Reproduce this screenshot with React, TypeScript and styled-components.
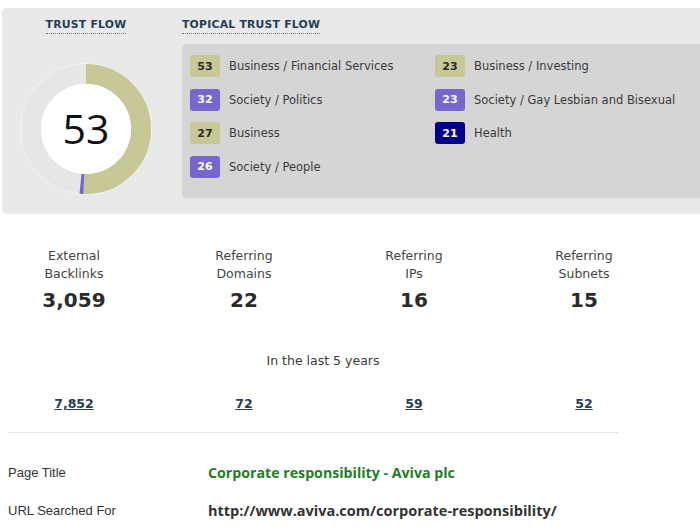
import React from "react";
import styled, { createGlobalStyle } from "styled-components";

const Global = createGlobalStyle`
  html, body { margin: 0; padding: 0; background: #fff; overflow: hidden; }
  body { font-family: "DejaVu Sans", Verdana, sans-serif; color: #333; }
`;

const Page = styled.div`
  width: 700px;
  overflow: hidden;
  padding-top: 8px;
`;

const TopPanel = styled.div`
  margin-left: 2px;
  width: 730px;
  height: 205px;
  background: #e9e9e9;
  border-radius: 4px;
  box-shadow: 0 1px 1px rgba(0, 0, 0, 0.06);
  display: flex;
`;

const TrustCol = styled.div`
  width: 168px;
  display: flex;
  flex-direction: column;
  align-items: center;
  padding-top: 10px;
`;

const Heading = styled.div`
  font-family: "DejaVu Sans", Verdana, sans-serif;
  font-weight: bold;
  font-size: 10.8px;
  letter-spacing: 0.25px;
  color: #233d58;
  border-bottom: 1px dotted #6a7c90;
  line-height: 14px;
  padding-bottom: 1px;
`;

const TopicalCol = styled.div`
  margin-left: 12px;
  flex: 1;
  display: flex;
  flex-direction: column;
  align-items: flex-start;
  padding-top: 10px;
`;

const TopicBox = styled.div`
  margin-top: 10px;
  align-self: stretch;
  height: 154px;
  box-sizing: border-box;
  background: #d5d5d5;
  border-radius: 4px 0 0 4px;
  padding: 11px 8px;
  display: grid;
  grid-template-columns: 245px 1fr;
  grid-template-rows: repeat(4, 22px);
  grid-auto-flow: column;
  row-gap: 11.5px;
`;

const TopicRow = styled.div`
  display: flex;
  align-items: center;
`;

const Badge = styled.span<{ $bg: string; $fg: string }>`
  width: 30px;
  height: 22px;
  border-radius: 3px;
  background: ${(p) => p.$bg};
  color: ${(p) => p.$fg};
  font-weight: bold;
  font-size: 11px;
  display: flex;
  align-items: center;
  justify-content: center;
  flex: none;
`;

const TopicLabel = styled.span`
  margin-left: 9px;
  font-size: 11.5px;
  color: #3a3a3a;
  white-space: nowrap;
`;

const DonutWrap = styled.div`
  position: relative;
  margin-top: 28px;
  width: 134px;
  height: 134px;
`;

const DonutValue = styled.div`
  position: absolute;
  inset: 0;
  display: flex;
  align-items: center;
  justify-content: center;
  font-family: "Open Sans", "Noto Sans", sans-serif;
  font-size: 41px;
  color: #111;
  padding-bottom: 3px;
`;

const Stats = styled.div`
  margin-top: 34px;
  display: grid;
  grid-template-columns: repeat(4, 170px);
`;

const Stat = styled.div`
  padding-right: 22px;
  display: flex;
  flex-direction: column;
  align-items: center;
  text-align: center;
`;

const StatLabel = styled.div`
  font-size: 12.5px;
  line-height: 18px;
  color: #444;
`;

const StatValue = styled.div`
  font-weight: bold;
  font-size: 20px;
  line-height: 28px;
  color: #2b2b2b;
  margin-top: 3px;
`;

const Period = styled.div`
  width: 646px;
  text-align: center;
  margin-top: 38px;
  font-size: 12.5px;
  line-height: 18px;
  color: #3a3a3a;
`;

const Links = styled.div`
  margin-top: 23px;
  display: grid;
  grid-template-columns: repeat(4, 170px);
`;

const LinkCell = styled.div`
  padding-right: 22px;
  text-align: center;
`;

const StatLink = styled.a`
  font-weight: bold;
  font-size: 12.5px;
  line-height: 18px;
  color: #2a3d52;
  text-decoration: underline;
`;

const Divider = styled.hr`
  margin: 19px 0 0 8px;
  width: 610px;
  border: none;
  border-top: 1px solid #e3e3e3;
`;

const InfoTable = styled.div`
  margin-top: 30px;
  margin-left: 8px;
  display: grid;
  grid-template-columns: 200px 1fr;
  row-gap: 18px;
  font-family: "Liberation Sans", Arial, sans-serif;
`;

const InfoLabel = styled.div`
  font-size: 13px;
  line-height: 20px;
  color: #333;
`;

const InfoValue = styled.div<{ $green?: boolean }>`
  font-family: "Open Sans", "Liberation Sans", sans-serif;
  font-weight: bold;
  font-size: ${(p) => (p.$green ? "14.2px" : "14.5px")};
  line-height: 20px;
  color: ${(p) => (p.$green ? "#1f7f1f" : "#333")};
`;

const OLIVE = "#c8c896";
const PURPLE = "#7766cc";
const NAVY = "#00008b";

const topics = [
  { v: 53, l: "Business / Financial Services", bg: OLIVE, fg: "#2b2b2b" },
  { v: 32, l: "Society / Politics", bg: PURPLE, fg: "#fff" },
  { v: 27, l: "Business", bg: OLIVE, fg: "#2b2b2b" },
  { v: 26, l: "Society / People", bg: PURPLE, fg: "#fff" },
  { v: 23, l: "Business / Investing", bg: OLIVE, fg: "#2b2b2b" },
  { v: 23, l: "Society / Gay Lesbian and Bisexual", bg: PURPLE, fg: "#fff" },
  { v: 21, l: "Health", bg: NAVY, fg: "#fff" },
];

const stats = [
  { a: "External", b: "Backlinks", v: "3,059", h: "7,852" },
  { a: "Referring", b: "Domains", v: "22", h: "72" },
  { a: "Referring", b: "IPs", v: "16", h: "59" },
  { a: "Referring", b: "Subnets", v: "15", h: "52" },
];

function Donut() {
  const r = 55;
  const c = 2 * Math.PI * r;
  const arc = (from: number, to: number, color: string) => (
    <circle
      cx={67}
      cy={67}
      r={r}
      fill="none"
      stroke={color}
      strokeWidth={20}
      strokeDasharray={`${((to - from) / 360) * c} ${c}`}
      strokeDashoffset={-(from / 360) * c}
      transform="rotate(-90 67 67)"
    />
  );
  return (
    <svg width={134} height={134} viewBox="0 0 134 134">
      <circle cx={67} cy={67} r={65.5} fill="#fff" />
      <circle cx={67} cy={67} r={55} fill="none" stroke="#e6e6e6" strokeWidth={20} />
      {arc(0, 182, OLIVE)}
      {arc(182, 185.5, PURPLE)}
      <circle cx={67} cy={67} r={45} fill="#fff" />
    </svg>
  );
}

export default function App() {
  return (
    <Page>
      <Global />
      <TopPanel>
        <TrustCol>
          <Heading>TRUST FLOW</Heading>
          <DonutWrap>
            <Donut />
            <DonutValue>53</DonutValue>
          </DonutWrap>
        </TrustCol>
        <TopicalCol>
          <Heading>TOPICAL TRUST FLOW</Heading>
          <TopicBox>
            {topics.map((t, i) => (
              <TopicRow key={i}>
                <Badge $bg={t.bg} $fg={t.fg}>
                  {t.v}
                </Badge>
                <TopicLabel>{t.l}</TopicLabel>
              </TopicRow>
            ))}
          </TopicBox>
        </TopicalCol>
      </TopPanel>

      <Stats>
        {stats.map((s) => (
          <Stat key={s.a + s.b}>
            <StatLabel>{s.a}</StatLabel>
            <StatLabel>{s.b}</StatLabel>
            <StatValue>{s.v}</StatValue>
          </Stat>
        ))}
      </Stats>

      <Period>In the last 5 years</Period>

      <Links>
        {stats.map((s) => (
          <LinkCell key={s.h}>
            <StatLink href="#">{s.h}</StatLink>
          </LinkCell>
        ))}
      </Links>

      <Divider />

      <InfoTable>
        <InfoLabel>Page Title</InfoLabel>
        <InfoValue $green>Corporate responsibility - Aviva plc</InfoValue>
        <InfoLabel>URL Searched For</InfoLabel>
        <InfoValue>http://www.aviva.com/corporate-responsibility/</InfoValue>
      </InfoTable>
    </Page>
  );
}
